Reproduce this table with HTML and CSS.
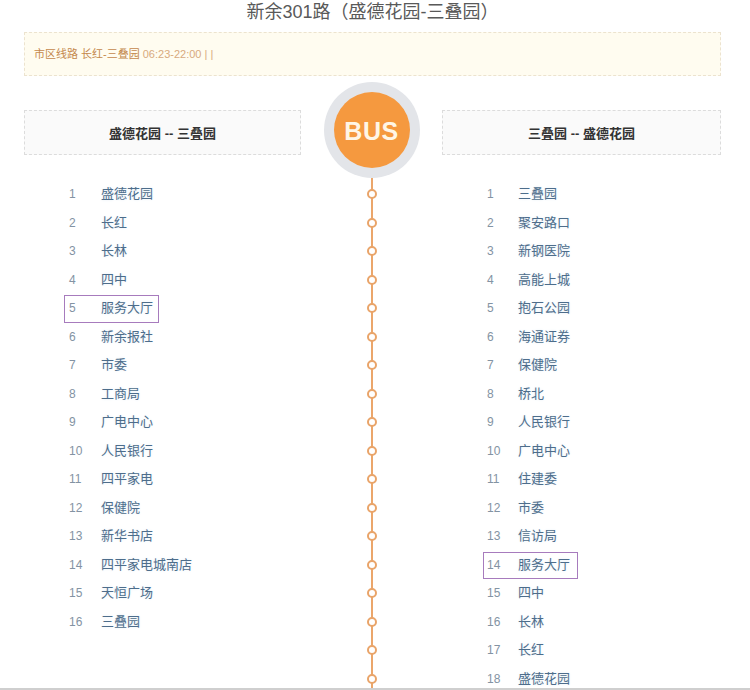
FILE: index.html
```html
<!DOCTYPE html>
<html lang="zh-CN">
<head>
<meta charset="utf-8">
<title>新余301路</title>
<link rel="stylesheet" href="styles.css">
</head>
<body>
<div class="page">
  <div class="wrap">
    <h1 class="title">新余301路（盛德花园-三叠园）</h1>
    <div class="notice"><span class="notice-strong">市区线路 长红-三叠园</span> <span class="notice-light">06:23-22:00 | |</span></div>
    <div class="board">
      <div class="col">
        <div class="dir-head">盛德花园 -- 三叠园</div>
        <ol class="stops left">
          <li class="stop"><span class="num">1</span><span class="name">盛德花园</span></li>
          <li class="stop"><span class="num">2</span><span class="name">长红</span></li>
          <li class="stop"><span class="num">3</span><span class="name">长林</span></li>
          <li class="stop"><span class="num">4</span><span class="name">四中</span></li>
          <li class="stop current"><span class="num">5</span><span class="name">服务大厅</span></li>
          <li class="stop"><span class="num">6</span><span class="name">新余报社</span></li>
          <li class="stop"><span class="num">7</span><span class="name">市委</span></li>
          <li class="stop"><span class="num">8</span><span class="name">工商局</span></li>
          <li class="stop"><span class="num">9</span><span class="name">广电中心</span></li>
          <li class="stop"><span class="num">10</span><span class="name">人民银行</span></li>
          <li class="stop"><span class="num">11</span><span class="name">四平家电</span></li>
          <li class="stop"><span class="num">12</span><span class="name">保健院</span></li>
          <li class="stop"><span class="num">13</span><span class="name">新华书店</span></li>
          <li class="stop"><span class="num">14</span><span class="name">四平家电城南店</span></li>
          <li class="stop"><span class="num">15</span><span class="name">天恒广场</span></li>
          <li class="stop"><span class="num">16</span><span class="name">三叠园</span></li>
        </ol>
      </div>
      <div class="col center">
        <div class="bus-badge"><div class="bus-core">BUS</div></div>
        <ul class="dots">
          <li class="dot"></li><li class="dot"></li><li class="dot"></li>
          <li class="dot"></li><li class="dot"></li><li class="dot"></li>
          <li class="dot"></li><li class="dot"></li><li class="dot"></li>
          <li class="dot"></li><li class="dot"></li><li class="dot"></li>
          <li class="dot"></li><li class="dot"></li><li class="dot"></li>
          <li class="dot"></li><li class="dot"></li><li class="dot"></li>
        </ul>
      </div>
      <div class="col">
        <div class="dir-head">三叠园 -- 盛德花园</div>
        <ol class="stops right">
          <li class="stop"><span class="num">1</span><span class="name">三叠园</span></li>
          <li class="stop"><span class="num">2</span><span class="name">聚安路口</span></li>
          <li class="stop"><span class="num">3</span><span class="name">新钢医院</span></li>
          <li class="stop"><span class="num">4</span><span class="name">高能上城</span></li>
          <li class="stop"><span class="num">5</span><span class="name">抱石公园</span></li>
          <li class="stop"><span class="num">6</span><span class="name">海通证券</span></li>
          <li class="stop"><span class="num">7</span><span class="name">保健院</span></li>
          <li class="stop"><span class="num">8</span><span class="name">桥北</span></li>
          <li class="stop"><span class="num">9</span><span class="name">人民银行</span></li>
          <li class="stop"><span class="num">10</span><span class="name">广电中心</span></li>
          <li class="stop"><span class="num">11</span><span class="name">住建委</span></li>
          <li class="stop"><span class="num">12</span><span class="name">市委</span></li>
          <li class="stop"><span class="num">13</span><span class="name">信访局</span></li>
          <li class="stop current"><span class="num">14</span><span class="name">服务大厅</span></li>
          <li class="stop"><span class="num">15</span><span class="name">四中</span></li>
          <li class="stop"><span class="num">16</span><span class="name">长林</span></li>
          <li class="stop"><span class="num">17</span><span class="name">长红</span></li>
          <li class="stop"><span class="num">18</span><span class="name">盛德花园</span></li>
        </ol>
      </div>
    </div>
  </div>
</div>
</body>
</html>
```
FILE: styles.css
```css
html, body {
  margin: 0;
  padding: 0;
  background: #fff;
}

body {
  font-family: "Liberation Sans", "Noto Sans CJK SC", sans-serif;
  color: #333;
}

.page {
  height: 688px;
  overflow: hidden;
  border-bottom: 2px solid #cfcfcf;
}

.wrap {
  width: 697px;
  margin-left: 24px;
}

.title {
  margin: 0;
  font-size: 18px;
  font-weight: normal;
  line-height: 24px;
  text-align: center;
  color: #595959;
}

.notice {
  margin-top: 8px;
  height: 44px;
  box-sizing: border-box;
  border: 1px dashed #ece3cf;
  background: #fffcf0;
  padding-left: 9px;
  display: flex;
  align-items: center;
  font-size: 11px;
  line-height: 14px;
}

.notice-strong {
  color: #c4884c;
}

.notice-light {
  color: #d8aa7e;
  margin-left: 3px;
}

.board {
  margin-top: 34px;
  display: grid;
  grid-template-columns: 277px 141px 279px;
}

.col {
  display: flex;
  flex-direction: column;
}

.dir-head {
  height: 45px;
  box-sizing: border-box;
  border: 1px dashed #dcdcdc;
  background: #fafafa;
  display: flex;
  align-items: center;
  justify-content: center;
  font-size: 13px;
  font-weight: bold;
  color: #333;
}

.stops {
  list-style: none;
  margin: 25px 0 0 40px;
  padding: 0;
}

.stops.right {
  margin-left: 41px;
}

.stop {
  height: 28.5px;
  display: flex;
  align-items: center;
}

.stop .num,
.stop .name {
  line-height: 20px;
}

.num {
  width: 37px;
  padding-left: 5px;
  box-sizing: border-box;
  font-size: 12px;
  color: #8393a3;
}

.right .num {
  width: 35px;
  padding-left: 4px;
}

.name {
  font-size: 13px;
  color: #4d6d8b;
  text-shadow: 0 0 3px #e3edf5;
  padding-right: 2px;
}

.current {
  position: relative;
}

.current::after {
  content: "";
  position: absolute;
  left: 0;
  width: 95px;
  top: 1px;
  bottom: 0;
  box-sizing: border-box;
  border: 1px solid #a77bbd;
}

.center {
  align-items: center;
}

.bus-badge {
  margin-top: -28px;
  width: 96px;
  height: 96px;
  box-sizing: border-box;
  border-radius: 50%;
  background: #e3e5e9;
  display: flex;
  align-items: center;
  justify-content: center;
  position: relative;
  z-index: 1;
}

.bus-core {
  width: 76px;
  height: 76px;
  border-radius: 50%;
  background: #f5993f;
  display: flex;
  align-items: center;
  justify-content: center;
  font-family: "Liberation Sans", Arial, sans-serif;
  font-weight: bold;
  font-size: 25px;
  padding-top: 2px;
  box-sizing: border-box;
  color: #fff6e6;
  letter-spacing: 0.5px;
}

.dots {
  list-style: none;
  margin: -4px 0 0;
  padding: 6px 0 0;
  width: 20px;
  background: linear-gradient(to right, transparent 9px, #eba66b 9px, #eba66b 11px, transparent 11px);
  display: flex;
  flex-direction: column;
  align-items: center;
}

.dot {
  height: 28.5px;
  display: flex;
  align-items: center;
  justify-content: center;
}

.dot::before {
  content: "";
  width: 10px;
  height: 10px;
  box-sizing: border-box;
  border: 2px solid #e9a469;
  border-radius: 50%;
  background: #fff;
}
```
